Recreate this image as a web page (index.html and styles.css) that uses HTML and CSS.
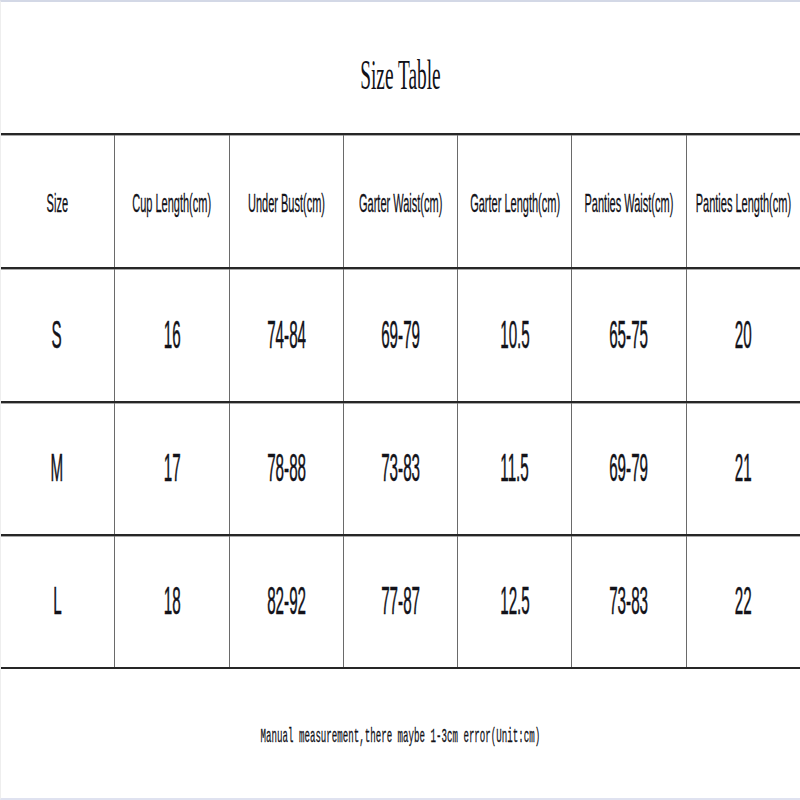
FILE: index.html
```html
<!DOCTYPE html>
<html>
<head>
<meta charset="utf-8">
<link rel="stylesheet" href="styles.css">
</head>
<body>
<div class="page">
  <div class="title"><span class="title-text">Size Table</span></div>
  <div class="table">
    <div class="row head">
      <div class="cell"><span class="t">Size</span></div>
      <div class="cell"><span class="t">Cup Length(cm)</span></div>
      <div class="cell"><span class="t">Under Bust(cm)</span></div>
      <div class="cell"><span class="t">Garter Waist(cm)</span></div>
      <div class="cell"><span class="t">Garter Length(cm)</span></div>
      <div class="cell"><span class="t">Panties Waist(cm)</span></div>
      <div class="cell"><span class="t">Panties Length(cm)</span></div>
    </div>
    <div class="row data">
      <div class="cell"><span class="t">S</span></div>
      <div class="cell"><span class="t">16</span></div>
      <div class="cell"><span class="t">74-84</span></div>
      <div class="cell"><span class="t">69-79</span></div>
      <div class="cell"><span class="t">10.5</span></div>
      <div class="cell"><span class="t">65-75</span></div>
      <div class="cell"><span class="t">20</span></div>
    </div>
    <div class="row data short">
      <div class="cell"><span class="t">M</span></div>
      <div class="cell"><span class="t">17</span></div>
      <div class="cell"><span class="t">78-88</span></div>
      <div class="cell"><span class="t">73-83</span></div>
      <div class="cell"><span class="t">11.5</span></div>
      <div class="cell"><span class="t">69-79</span></div>
      <div class="cell"><span class="t">21</span></div>
    </div>
    <div class="row data last">
      <div class="cell"><span class="t">L</span></div>
      <div class="cell"><span class="t">18</span></div>
      <div class="cell"><span class="t">82-92</span></div>
      <div class="cell"><span class="t">77-87</span></div>
      <div class="cell"><span class="t">12.5</span></div>
      <div class="cell"><span class="t">73-83</span></div>
      <div class="cell"><span class="t">22</span></div>
    </div>
  </div>
  <div class="note"><span class="note-text">Manual measurement,there maybe 1-3cm error(Unit:cm)</span></div>
</div>
</body>
</html>
```

FILE: styles.css
```css
html, body {
  margin: 0;
  padding: 0;
  background: #ffffff;
}

.page {
  width: 800px;
  height: 800px;
  box-sizing: border-box;
  border-top: 2px solid #d3d8e6;
  border-bottom: 2px solid #dfe2f0;
  border-left: 1px solid #eeeeee;
  display: flex;
  flex-direction: column;
  overflow: hidden;
  color: #121219;
}

.title {
  height: 131px;
  box-sizing: border-box;
  padding-top: 14px;
  display: flex;
  align-items: center;
  justify-content: center;
}

.title-text {
  display: inline-block;
  font-family: "Liberation Serif", serif;
  font-size: 43px;
  transform: scaleX(0.45);
  white-space: nowrap;
}

.table {
  display: flex;
  flex-direction: column;
  margin-left: -1px;
}

.row {
  display: grid;
  grid-template-columns: repeat(7, minmax(0, 1fr));
  height: 134px;
  box-sizing: border-box;
  border-top: 2px solid #262626;
  box-shadow: 0 1px 0 #a9a9a9 inset;
}

.row.short {
  height: 133px;
}

.row.last {
  border-bottom: 2px solid #262626;
  height: 135px;
}

.cell {
  min-width: 0;
  display: flex;
  align-items: center;
  justify-content: center;
  border-left: 1px solid #6a6a6a;
  overflow: visible;
}

.cell:first-child {
  border-left: none;
}

.t {
  display: inline-block;
  white-space: nowrap;
  font-family: "Liberation Sans", Arial, sans-serif;
  -webkit-text-stroke: 0.5px #121219;
}

.head .t {
  font-size: 25px;
  transform: scaleX(0.44);
  margin-top: 4px;
  -webkit-text-stroke: 0.3px #121219;
}

.data .t {
  font-size: 38px;
  transform: scaleX(0.4);
}

.note {
  flex: 1;
  display: flex;
  align-items: center;
  justify-content: center;
  padding-top: 6px;
}

.note-text {
  display: inline-block;
  white-space: nowrap;
  font-family: "Liberation Mono", monospace;
  font-size: 21px;
  transform: scaleX(0.435);
  -webkit-text-stroke: 0.3px #121219;
}
```
